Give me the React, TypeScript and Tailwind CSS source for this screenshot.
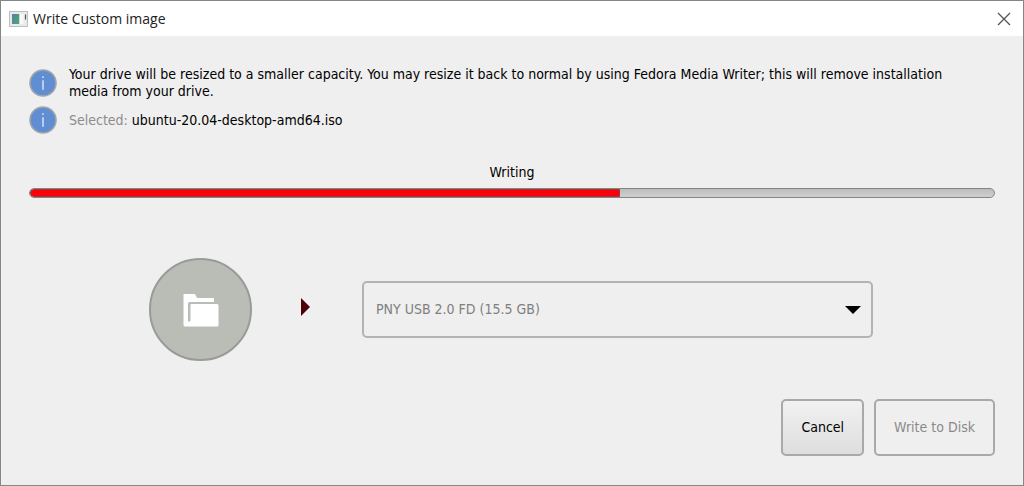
import type { ReactNode } from "react";

function InfoIcon() {
  return (
    <svg viewBox="0 0 28 28" className="size-7 shrink-0" aria-hidden="true">
      <circle cx="14" cy="14" r="13" fill="#618ed2" stroke="#a3a6a8" strokeWidth="1.6" />
      <path d="M14 7.2v1.8M14 11.2v9.6" stroke="#c3d5ef" strokeWidth="1.8" />
    </svg>
  );
}

function AppIcon() {
  return (
    <svg viewBox="0 0 19 16" className="h-4 w-[19px] shrink-0" aria-hidden="true">
      <defs>
        <linearGradient id="screen" x1="0" y1="0" x2="1" y2="1">
          <stop offset="0" stopColor="#5b7fa3" />
          <stop offset="1" stopColor="#4aa877" />
        </linearGradient>
      </defs>
      <rect x="0.5" y="0.5" width="18" height="15" fill="#e9ebeb" stroke="#bcbfc0" />
      <rect x="3" y="3" width="7.5" height="10" fill="url(#screen)" />
      <rect x="10.5" y="3" width="4" height="10" fill="#f8f8f8" />
      <path d="M16.5 3.5v5" stroke="#555" strokeWidth="1.2" />
    </svg>
  );
}

function FolderIcon() {
  return (
    <svg viewBox="0 0 36 34" className="h-[34px] w-9" aria-hidden="true" fill="#fff">
      <path d="M0.5 1h11.5l2 4H30q1 0 1 1v3H6.5q-1.5 0-1.500 1.500V28.500h1.500q1 0 1-1V12q0-1 1-1H34q1.500 0 1.500 1.500V32q0 1.500-1.500 1.500H2q-1.500 0-1.500-1.500z" />
    </svg>
  );
}

function InfoRow({ children }: { children: ReactNode }) {
  return (
    <div className="flex items-center gap-3 pr-8">
      <InfoIcon />
      <p className="min-w-0">{children}</p>
    </div>
  );
}

export default function App() {
  const progress = 61.2;

  return (
    <div
      role="dialog"
      aria-labelledby="title"
      className="flex min-h-screen flex-col border border-[#868686] bg-[#efefef] font-['DejaVu_Sans_Condensed',sans-serif] text-sm leading-[17px] text-black"
    >
      <header className="flex h-[35px] items-center gap-[5px] bg-white pr-3 pl-2">
        <AppIcon />
        <h1 id="title" className="flex-1 font-['Open_Sans',sans-serif] text-[#222]">
          Write Custom image
        </h1>
        <button type="button" aria-label="Close">
          <svg viewBox="0 0 14 14" className="size-3.5" aria-hidden="true">
            <path d="M1 1l12 12M13 1L1 13" stroke="#555" strokeWidth="1.3" />
          </svg>
        </button>
      </header>

      <main className="flex flex-1 flex-col px-7 pt-[30px] pb-[29px]">
        <div className="flex flex-col gap-1.5">
          <InfoRow>
            Your drive will be resized to a smaller capacity. You may resize it back to normal by using Fedora Media
            Writer; this will remove installation media from your drive.
          </InfoRow>
          <InfoRow>
            <span className="text-[#8c8c8c]">Selected:</span> ubuntu-20.04-desktop-amd64.iso
          </InfoRow>
        </div>

        <p id="status" className="mt-7 text-center leading-5">
          Writing
        </p>
        <div
          role="progressbar"
          aria-labelledby="status"
          aria-valuenow={progress}
          aria-valuemin={0}
          aria-valuemax={100}
          className="mt-1.5 h-2.5 overflow-hidden rounded-full border border-[#858585] bg-linear-to-b from-[#bdbdbd] to-[#cfcfcf]"
        >
          <div
            className="h-full rounded-l-full rounded-r-xs border border-[#a33535] bg-[#f8000c]"
            style={{ width: `${progress}%` }}
          />
        </div>

        <div className="mt-15 flex items-center pr-[122px] pl-30">
          <div className="flex size-[103px] shrink-0 items-center justify-center rounded-full border-2 border-[#999b98] bg-[#babdb6]">
            <FolderIcon />
          </div>
          <svg viewBox="0 0 9 18" className="mr-[52px] mb-1.5 ml-[49px] h-[18px] w-[9px] shrink-0" aria-hidden="true">
            <path d="M0 0l9 9-9 9z" fill="#4c0007" />
          </svg>
          <div className="relative min-w-0 flex-1">
            <select
              aria-label="Target drive"
              disabled
              className="h-[57px] w-full appearance-none rounded-[5px] border-2 border-[#b3b3b3] px-3 text-[#808080] opacity-100"
            >
              <option>PNY USB 2.0 FD (15.5 GB)</option>
            </select>
            <svg
              viewBox="0 0 16 8"
              className="pointer-events-none absolute inset-y-0 right-3 my-auto h-2 w-4"
              aria-hidden="true"
            >
              <path d="M0 0h16L8 8z" fill="#000" />
            </svg>
          </div>
        </div>

        <div className="mt-auto flex justify-end gap-2.5">
          <button
            type="button"
            className="h-[57px] rounded-[5px] border-2 border-[#a9a9a9] bg-linear-to-b from-[#f1f1f1] to-[#dedede] px-[18px]"
          >
            Cancel
          </button>
          <button type="button" disabled className="h-[57px] rounded-[5px] border-2 border-[#a9a9a9] px-[18px] text-[#8a8a8a]">
            Write to Disk
          </button>
        </div>
      </main>
    </div>
  );
}
